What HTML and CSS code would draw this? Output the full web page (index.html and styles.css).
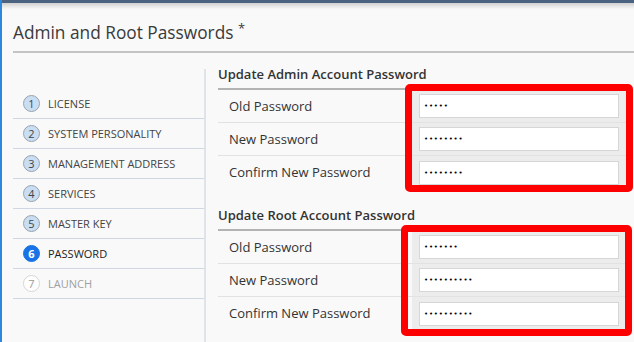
FILE: index.html
```html
<!DOCTYPE html>
<html>
<head>
<meta charset="utf-8">
<link rel="stylesheet" href="styles.css">
</head>
<body>
<div class="topbar"></div>
<div class="shade"></div>
<div class="page">
  <h1 class="title">Admin and Root Passwords <sup class="req">*</sup></h1>
  <div class="main">
    <ul class="steps">
      <li class="step done"><span class="num">1</span><span class="label">LICENSE</span></li>
      <li class="step done"><span class="num">2</span><span class="label">SYSTEM PERSONALITY</span></li>
      <li class="step done"><span class="num">3</span><span class="label">MANAGEMENT ADDRESS</span></li>
      <li class="step done"><span class="num">4</span><span class="label">SERVICES</span></li>
      <li class="step done"><span class="num">5</span><span class="label">MASTER KEY</span></li>
      <li class="step active"><span class="num">6</span><span class="label">PASSWORD</span></li>
      <li class="step todo"><span class="num">7</span><span class="label">LAUNCH</span></li>
    </ul>
    <div class="content">
      <section class="group">
        <h2 class="group-title">Update Admin Account Password</h2>
        <div class="row"><div class="cell-label">Old Password</div><div class="cell-input"><input class="pw" type="password" value="11111"></div></div>
        <div class="row"><div class="cell-label">New Password</div><div class="cell-input"><input class="pw" type="password" value="11111111"></div></div>
        <div class="row last"><div class="cell-label">Confirm New Password</div><div class="cell-input"><input class="pw" type="password" value="11111111"></div></div>
        <div class="mark mark-a"></div>
      </section>
      <section class="group second">
        <h2 class="group-title">Update Root Account Password</h2>
        <div class="row"><div class="cell-label">Old Password</div><div class="cell-input"><input class="pw" type="password" value="1111111"></div></div>
        <div class="row"><div class="cell-label">New Password</div><div class="cell-input"><input class="pw" type="password" value="1111111111"></div></div>
        <div class="row last"><div class="cell-label">Confirm New Password</div><div class="cell-input"><input class="pw" type="password" value="1111111111"></div></div>
        <div class="mark mark-b"></div>
      </section>
    </div>
  </div>
</div>
</body>
</html>
```
FILE: styles.css
```css
html, body {
  margin: 0;
  padding: 0;
}
body {
  background: #f9f9f9;
  border-left: 2px solid #2b88de;
  min-height: 342px;
  box-sizing: border-box;
  font-family: "Open Sans", "Noto Sans", sans-serif;
  color: #333;
  overflow: hidden;
}
.topbar {
  height: 3px;
  background: #4a617f;
}
.shade {
  height: 7px;
  background: linear-gradient(#cfcfcf, #f1f1f1 70%, #f9f9f9);
}
.page {
  padding-left: 11px;
}
.title {
  margin: 11px 0 0 0;
  font-size: 17.3px;
  font-weight: 400;
  line-height: 24px;
  color: #3a3a3a;
  padding-bottom: 5px;
  border-bottom: 2px solid #c4c4c4;
}
.req {
  font-size: 13px;
  vertical-align: 0;
  position: relative;
  top: -6px;
}
.main {
  display: flex;
  margin-top: 12px;
}
.steps {
  list-style: none;
  margin: 4px 0 0 0;
  padding: 20px 0 0 0;
  width: 191px;
  border-right: 2px solid #dfe4ea;
  min-height: 260px;
}
.step {
  display: flex;
  align-items: center;
  height: 29px;
  border-bottom: 1px solid #cfd8e2;
  padding-left: 10px;
  gap: 8px;
}
.num {
  width: 15px;
  height: 15px;
  border-radius: 50%;
  border: 1px solid #9aa3ad;
  background: #c9def3;
  font-size: 11px;
  line-height: 15px;
  text-align: center;
  color: #444;
}
.label {
  font-size: 11px;
  color: #444;
}
.active .num {
  background: #1a73e6;
  border-color: #1a73e6;
  color: #fff;
  font-weight: 700;
}
.active .label {
  color: #222;
}
.todo .num {
  background: #fff;
  border-color: #d6d6d6;
  color: #9a9a9a;
}
.todo .label {
  color: #a0a0a0;
}
.content {
  margin-left: 12px;
  width: 408px;
}
.group {
  position: relative;
}
.second {
  margin-top: 17px;
}
.group-title {
  margin: 0;
  font-size: 13px;
  font-weight: 600;
  line-height: 18px;
  color: #333;
  padding-bottom: 5px;
  border-bottom: 2px solid #b3b3b3;
}
.row {
  display: flex;
  height: 32px;
  border-bottom: 1px solid #e2e2e2;
}
.row.last {
  border-bottom: none;
  height: 33px;
}
.cell-label {
  width: 183px;
  padding-left: 11px;
  font-size: 13px;
  line-height: 32px;
  color: #333;
}
.cell-input {
  flex: 1;
  background: #ececec;
  display: flex;
  align-items: center;
  padding: 0 7px;
}
.pw {
  width: 200px;
  height: 24px;
  box-sizing: border-box;
  border: 1px solid #d6d6d6;
  background: #fff;
  padding: 0 4px;
  font-family: "DejaVu Sans", sans-serif;
  font-size: 7px;
  letter-spacing: 0.8px;
  color: #000;
  outline: none;
}
.mark {
  position: absolute;
  border: 7px solid #ff0000;
  border-radius: 5px;
  box-sizing: border-box;
}
.mark-a {
  left: 187px;
  top: 19px;
  width: 228px;
  height: 108px;
}
.mark-b {
  left: 183px;
  top: 19px;
  width: 231px;
  height: 111px;
}
```
